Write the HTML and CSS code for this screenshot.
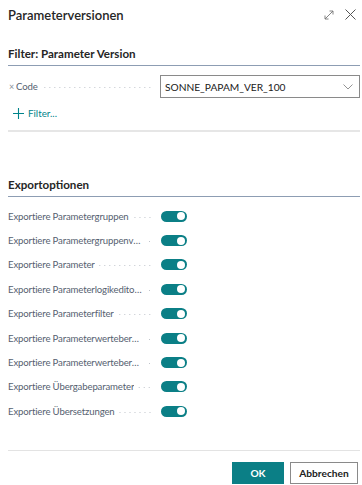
FILE: index.html
```html
<!DOCTYPE html>
<html lang="de">
<head>
<meta charset="utf-8">
<title>Parameterversionen</title>
<link rel="stylesheet" href="styles.css">
</head>
<body>
<div class="dialog">
  <header class="titlebar">
    <h1 class="title">Parameterversionen</h1>
    <div class="actions">
      <svg class="icon-expand" width="10" height="10" viewBox="0 0 10 10"><path d="M1 9 L9 1 M5.5 1 H9 V4.5 M1 5.5 V9 H4.5" fill="none" stroke="#777" stroke-width="0.9"/></svg>
      <svg class="icon-close" width="11" height="11" viewBox="0 0 11 11"><path d="M0.5 0.5 L10.5 10.5 M10.5 0.5 L0.5 10.5" fill="none" stroke="#555" stroke-width="1"/></svg>
    </div>
  </header>

  <section class="group group-filter">
    <h2 class="group-title">Filter: Parameter Version</h2>
    <div class="field">
      <div class="label"><span class="remove">×</span><span class="label-text">Code</span><span class="leader"></span></div>
      <div class="select">
        <span class="select-value">SONNE_PAPAM_VER_100</span>
        <svg class="chev" width="10" height="6" viewBox="0 0 10 6"><path d="M0.5 0.5 L5 5 L9.5 0.5" fill="none" stroke="#888" stroke-width="0.9"/></svg>
      </div>
    </div>
    <div class="add-filter">
      <svg class="plus" width="11" height="11" viewBox="0 0 11 11"><path d="M5.5 0 V11 M0 5.5 H11" stroke="#00838a" stroke-width="1.1"/></svg>
      <span>Filter...</span>
    </div>
  </section>

  <div class="separator"></div>

  <section class="group group-export">
    <h2 class="group-title">Exportoptionen</h2>
    <div class="rows">
      <div class="row"><div class="label"><span class="label-text">Exportiere Parametergruppen</span><span class="leader"></span></div><span class="toggle"></span></div>
      <div class="row"><div class="label"><span class="label-text">Exportiere Parametergruppenvarianten</span><span class="leader"></span></div><span class="toggle"></span></div>
      <div class="row"><div class="label"><span class="label-text">Exportiere Parameter</span><span class="leader"></span></div><span class="toggle"></span></div>
      <div class="row"><div class="label"><span class="label-text">Exportiere Parameterlogikeditorzeilen</span><span class="leader"></span></div><span class="toggle"></span></div>
      <div class="row"><div class="label"><span class="label-text">Exportiere Parameterfilter</span><span class="leader"></span></div><span class="toggle"></span></div>
      <div class="row"><div class="label"><span class="label-text">Exportiere Parameterwertebereiche</span><span class="leader"></span></div><span class="toggle"></span></div>
      <div class="row"><div class="label"><span class="label-text">Exportiere Parameterwertebereichszeilen</span><span class="leader"></span></div><span class="toggle"></span></div>
      <div class="row"><div class="label"><span class="label-text">Exportiere Übergabeparameter</span><span class="leader"></span></div><span class="toggle"></span></div>
      <div class="row"><div class="label"><span class="label-text">Exportiere Übersetzungen</span><span class="leader"></span></div><span class="toggle"></span></div>
    </div>
  </section>

  <footer class="footer">
    <button class="btn btn-primary">OK</button>
    <button class="btn btn-secondary">Abbrechen</button>
  </footer>
</div>
</body>
</html>
```

FILE: styles.css
```css
* { box-sizing: border-box; }
html, body { margin: 0; padding: 0; background: #fff; }
body {
  font-family: "Lato", "Open Sans", "Liberation Sans", sans-serif;
  color: #212121;
  width: 362px;
  height: 485px;
  overflow: hidden;
}
.dialog {
  display: flex;
  flex-direction: column;
  height: 485px;
  padding: 0 2px 0 8px;
}
.titlebar {
  display: flex;
  align-items: center;
  justify-content: space-between;
  height: 28px;
  padding-top: 1px;
}
.title {
  margin: 0;
  font-size: 13px;
  font-weight: 600;
  color: #262626;
}
.actions {
  display: flex;
  align-items: center;
  gap: 11px;
  padding-right: 4px;
}
.icon-expand { display: block; }
.icon-close { display: block; }

.group-title {
  margin: 0;
  font-size: 11.6px;
  font-weight: 700;
  color: #262626;
  line-height: 16px;
  padding-bottom: 3px;
  border-bottom: 1px solid #8d9db3;
}
.group-filter { margin-top: 18px; }

.field {
  display: flex;
  align-items: center;
  margin-top: 9px;
  height: 23px;
}
.label {
  display: flex;
  align-items: center;
  width: 144px;
  flex: none;
  font-size: 9.6px;
  letter-spacing: -0.15px;
  color: #566170;
  min-width: 0;
}
.remove {
  font-size: 9px;
  color: #8a8f99;
  margin: 0 2px 0 1px;
}
.label-text {
  white-space: nowrap;
  overflow: hidden;
  text-overflow: ellipsis;
  min-width: 0;
}
.leader {
  flex: 1 0 6px;
  height: 3px;
  margin: 2px 0 0 4px;
  background-image: radial-gradient(circle, #c0c4cb 0.6px, transparent 0.8px);
  background-size: 5px 3px;
  background-repeat: repeat-x;
  background-position: right center;
}
.select {
  flex: 1;
  display: flex;
  align-items: center;
  justify-content: space-between;
  height: 23px;
  margin-left: 8px;
  border: 1px solid #8a8a8a;
  padding: 0 6px 0 4px;
  font-size: 10.2px;
  color: #212121;
}
.add-filter {
  display: flex;
  align-items: center;
  gap: 4px;
  margin-top: 9px;
  padding-left: 5px;
  font-size: 9.8px;
  color: #00838a;
}
.plus { display: block; }

.separator {
  height: 2px;
  background: #e6e6e6;
  margin-top: 11px;
}

.group-export { margin-top: 45px; }
.rows { margin-top: 7px; }
.row {
  display: flex;
  align-items: center;
  height: 24.4px;
}
.toggle {
  position: relative;
  flex: none;
  width: 26px;
  height: 11px;
  border-radius: 6px;
  background: #0b7f86;
  margin-left: 9px;
}
.toggle::after {
  content: "";
  position: absolute;
  right: 2px;
  top: 1.5px;
  width: 8px;
  height: 8px;
  border-radius: 50%;
  background: #fff;
}

.footer {
  margin-top: auto;
  border-top: 1px solid #e3e3e3;
  display: flex;
  justify-content: flex-end;
  gap: 6px;
  padding: 11px 2px 1px 0;
  height: 35px;
}
.btn {
  font-family: inherit;
  font-size: 10.2px;
  font-weight: 700;
  height: 22px;
  padding: 0;
  border-radius: 0;
  cursor: pointer;
}
.btn-primary {
  width: 52px;
  background: #0b7f86;
  color: #fff;
  border: 1px solid #0b7f86;
}
.btn-secondary {
  width: 68px;
  background: #fff;
  color: #212121;
  border: 1px solid #8a8a8a;
}
```
